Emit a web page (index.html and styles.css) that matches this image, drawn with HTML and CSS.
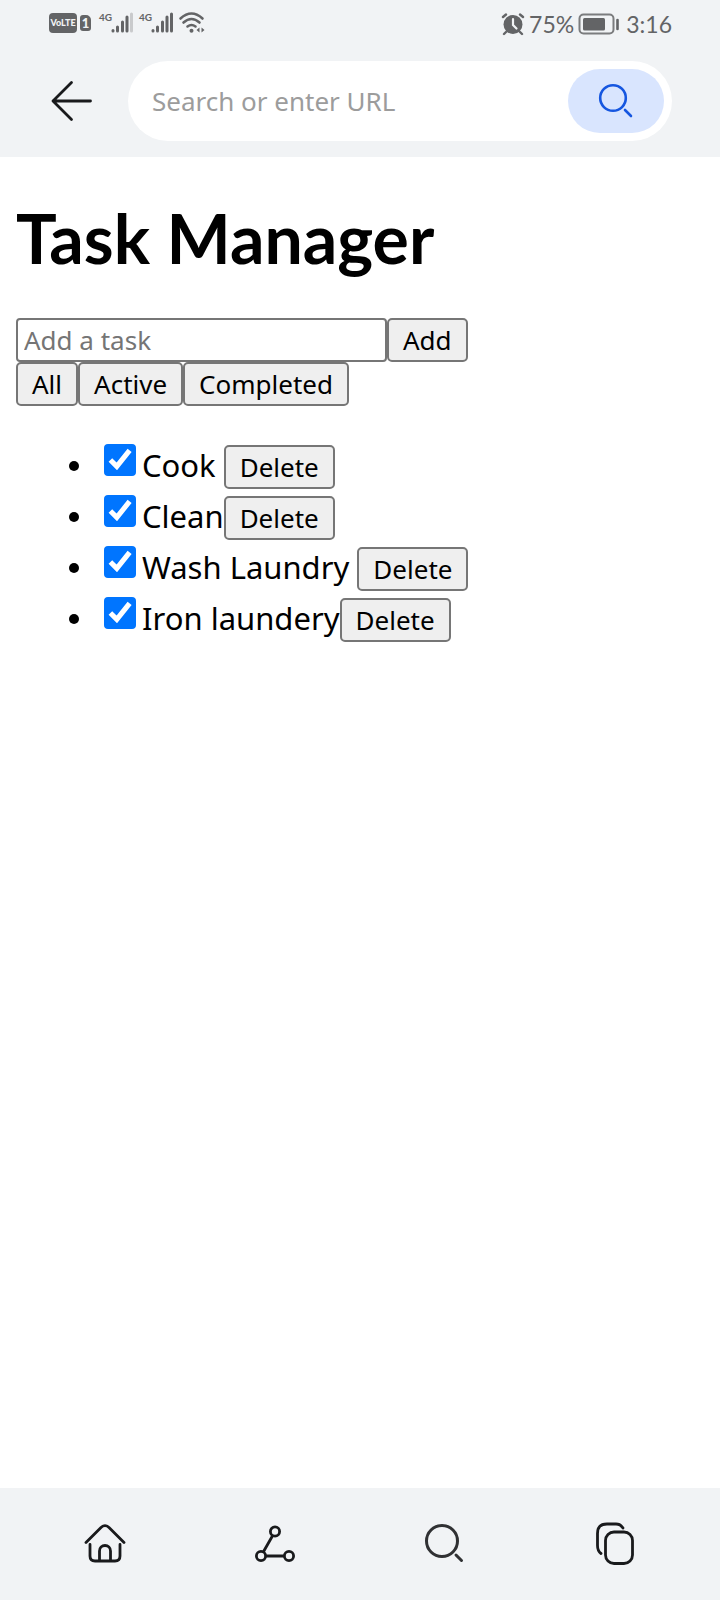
FILE: index.html
```
<!DOCTYPE html>
<html lang="en">
<head>
<meta charset="utf-8">
<meta name="viewport" content="width=device-width">
<title>Task Manager</title>
<link rel="stylesheet" href="styles.css">
</head>
<body>
<header class="browser-bar">
  <div class="status">
    <div class="status-group">
      <span class="badge">VoLTE</span>
      <span class="badge badge-sim">1</span>
      <span class="signal">
        <span class="network">4G</span>
        <svg width="22" height="22" viewBox="0 0 22 22" stroke-width="3" stroke-linecap="round" stroke="#636466"><path d="M2 18.500v.5M6.500 15v4M11.500 10v9M16 5v14"/><path d="M20.500 2v17" stroke="#c9cacc"/></svg>
      </span>
      <span class="signal">
        <span class="network">4G</span>
        <svg width="22" height="22" viewBox="0 0 22 22" stroke-width="3" stroke-linecap="round" stroke="#636466"><path d="M2 18.500v.5M6.500 15v4M11.500 10v9M16 5v14M20.500 2v17"/></svg>
      </span>
      <svg width="26" height="22" viewBox="0 0 26 22" fill="none" stroke="#636466" stroke-width="2.600" stroke-linecap="round"><path d="M1.500 6.500Q12.500-3.500 23.500 6.500M4.500 10.500Q12.500 3.500 20.500 10.500M8.500 14.500Q12.500 11.500 16.500 14.500"/><circle cx="12.500" cy="18.800" r="2" fill="#636466" stroke="none"/><path d="M20.500 15.500v5l-3-2.500zM22.500 15.500v5l3-2.500z" fill="#636466" stroke="none"/></svg>
    </div>
    <div class="status-group status-right">
      <svg width="24" height="22" viewBox="0 0 24 22"><circle cx="12" cy="11.500" r="9.500" fill="#636466"/><path d="M2 4l3-2.500M22 4l-3-2.500M5 19l-2 2M19 19l2 2" stroke="#636466" stroke-width="2.400" stroke-linecap="round"/><path d="M12 6v6l3.500 3.500" fill="none" stroke="#f1f3f5" stroke-width="2.200" stroke-linecap="round"/></svg>
      <span>75%</span>
      <svg class="battery" width="42" height="22" viewBox="0 0 42 22"><rect x="1.500" y="1.500" width="34" height="19" rx="4" fill="none" stroke="#7b7c7e" stroke-width="2"/><rect x="5" y="5" width="22" height="12.500" rx="1.500" fill="#636466"/><path d="M39.500 7v9" stroke="#636466" stroke-width="2.600" stroke-linecap="round"/></svg>
      <span>3:16</span>
    </div>
  </div>
  <div class="address-row">
    <button class="icon-button" aria-label="Back"><svg width="42" height="42" viewBox="0 0 42 42" fill="none" stroke="#191a1c" stroke-width="2.800" stroke-linecap="round" stroke-linejoin="round"><path d="M20.500 2.500 2 21l18.500 18.500M2 21h37.500"/></svg></button>
    <form class="search">
      <input class="search-input" type="text" placeholder="Search or enter URL" aria-label="Search or enter URL">
      <button class="search-button" type="button" aria-label="Search"><svg width="36" height="36" viewBox="0 0 36 36" fill="none" stroke="#1556e0" stroke-width="2.600" stroke-linecap="round"><circle cx="15" cy="15" r="12.800"/><path d="m27 27 6 6"/></svg></button>
    </form>
  </div>
</header>
<main class="page">
  <h1 class="title">Task Manager</h1>
  <form class="row">
    <input class="task-input" type="text" placeholder="Add a task" aria-label="Add a task">
    <button class="button" type="button">Add</button>
  </form>
  <div class="row">
    <button class="button">All</button>
    <button class="button">Active</button>
    <button class="button">Completed</button>
  </div>
  <ul class="tasks">
    <li class="task"><input class="check" type="checkbox" id="t1" checked><label class="label" for="t1">Cook </label><button class="button">Delete</button></li>
    <li class="task"><input class="check" type="checkbox" id="t2" checked><label class="label" for="t2">Clean</label><button class="button">Delete</button></li>
    <li class="task"><input class="check" type="checkbox" id="t3" checked><label class="label" for="t3">Wash Laundry </label><button class="button">Delete</button></li>
    <li class="task"><input class="check" type="checkbox" id="t4" checked><label class="label" for="t4">Iron laundery</label><button class="button">Delete</button></li>
  </ul>
</main>
<nav class="nav">
  <button class="icon-button" aria-label="Home"><svg width="42" height="42" viewBox="0 0 42 42" fill="none" stroke="#191a1c" stroke-width="2.800" stroke-linecap="round" stroke-linejoin="round"><path d="M2 19.500 17 4.500Q21 .8 25 4.500L40 19.500"/><path d="M6 21.500V33q0 5 5 5h20q5 0 5-5V21.500"/><path d="M15.500 37.500V28a5.500 5.500 0 0 1 11 0v9.500"/></svg></button>
  <button class="icon-button" aria-label="Share"><svg width="42" height="42" viewBox="0 0 42 42" fill="none" stroke="#191a1c" stroke-width="2.800"><circle cx="21" cy="8.500" r="4.600"/><circle cx="7" cy="33" r="4.600"/><circle cx="35" cy="33" r="4.600"/><path d="M18.700 12.500 9.300 29M11.600 33h18.800"/></svg></button>
  <button class="icon-button" aria-label="Search"><svg width="42" height="42" viewBox="0 0 42 42" fill="none" stroke="#303133" stroke-width="3" stroke-linecap="round"><circle cx="18" cy="18" r="15.500"/><path d="m32 32 5.500 5.500"/></svg></button>
  <button class="icon-button" aria-label="Tabs"><svg width="42" height="42" viewBox="0 0 42 42" fill="none" stroke="#191a1c" stroke-width="2.800" stroke-linecap="round"><rect x="11.500" y="9" width="27" height="31.500" rx="8.500"/><path d="M29 5Q26.500 1 22 1H13Q3.500 1 3.500 10.500v12q0 5.500 3.500 8"/></svg></button>
</nav>
</body>
</html>
```
FILE: styles.css
```
* { box-sizing: border-box; }
body {
  margin: 0;
  min-height: 100vh;
  display: flex;
  flex-direction: column;
  background: #fff;
  color: #000;
  font-family: "Noto Sans", "Open Sans", sans-serif;
  font-size: 31px;
}
svg { display: block; flex: none; overflow: visible; }
button, input { font-family: inherit; margin: 0; }
.browser-bar { background: #f1f3f5; padding: 0 48px 16px; }
.status {
  height: 61px;
  padding: 12px 0 0 1px;
  display: flex;
  justify-content: space-between;
  align-items: flex-start;
  color: #636466;
  font-family: Lato, sans-serif;
  font-size: 23px;
  line-height: 24px;
}
.status-group { display: flex; align-items: center; }
.status-right { gap: 4px; }
.battery { margin-right: 2px; }
.badge {
  width: 28px;
  height: 20px;
  border-radius: 4px;
  background: #636466;
  color: #f1f3f5;
  font: 900 9px/20px Lato, sans-serif;
  text-align: center;
}
.badge-sim { width: 11px; height: 16px; margin: 0 8px 0 3px; font-size: 13px; line-height: 16px; border-radius: 3px 5px 3px 3px; }
.signal { display: flex; align-items: flex-start; width: 40px; }
.network { width: 12px; font: bold 10px/10px Lato, sans-serif; }
.address-row { display: flex; align-items: center; justify-content: space-between; gap: 35px; }
.icon-button { border: 0; background: none; padding: 0; }
.address-row .icon-button { margin-left: 3px; }
.search {
  flex: 1;
  height: 80px;
  display: flex;
  padding: 8px 8px 8px 24px;
  border-radius: 40px;
  background: #fff;
}
.search-input { flex: 1; min-width: 0; border: 0; padding: 0; outline: 0; background: none; font-size: 26px; }
.search-input::placeholder { color: #9c9c9c; }
.search-button { width: 96px; border: 0; border-radius: 32px; background: #d9e5fe; display: grid; place-items: center; padding: 0; }
.page { flex: 1; padding: 0 16px; }
.title { margin: 42px 0; font-family: Lato, sans-serif; font-size: 68px; line-height: 77px; }
.row { display: flex; }
.task-input {
  width: 371px;
  height: 44px;
  border: 2px solid #767676;
  border-radius: 4px;
  padding: 0 6px;
  font-size: 26px;
}
.task-input::placeholder { color: #757575; }
.button {
  height: 44px;
  border: 2px solid #767676;
  border-radius: 5px;
  padding: 0 14px;
  background: #efefef;
  color: #000;
  font-size: 26px;
  line-height: 36px;
}
.tasks { margin: 36px 0; padding-left: 80px; list-style: none; }
.task { position: relative; display: flex; align-items: flex-start; height: 51px; padding-left: 8px; }
.task::before { content: ""; position: absolute; left: -27px; top: 19px; width: 10px; height: 10px; border-radius: 50%; background: #000; }
.task .button { margin-top: 3px; }
.check { width: 32px; height: 32px; margin: 2px 6px 0 0; accent-color: #0075ff; clip-path: inset(0 round 4px); }
.label { white-space: pre; line-height: 46px; }
.nav { height: 112px; padding: 0 20px; background: #f1f3f5; display: grid; grid-template-columns: repeat(4, 1fr); place-items: center; }
```
